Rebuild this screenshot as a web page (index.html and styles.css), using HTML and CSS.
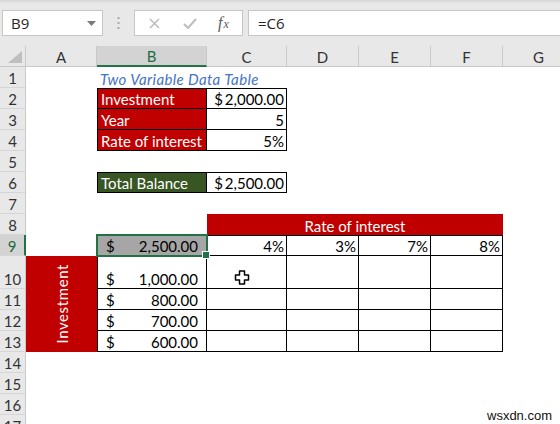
FILE: index.html
```html
<!DOCTYPE html>
<html>
<head>
<meta charset="utf-8">
<link rel="stylesheet" href="styles.css">
</head>
<body>
<div class="app">
  <div class="toolbar">
    <div class="namebox"><span>B9</span>
      <svg class="drop" width="9" height="5" viewBox="0 0 9 5"><polygon points="0,0 9,0 4.5,5" fill="#7a7a7a"/></svg>
    </div>
    <div class="dots">
      <svg width="3" height="12" viewBox="0 0 3 12"><rect x="0.5" y="0" width="2" height="2" fill="#a8a8a8"/><rect x="0.5" y="5" width="2" height="2" fill="#a8a8a8"/><rect x="0.5" y="10" width="2" height="2" fill="#a8a8a8"/></svg>
    </div>
    <div class="fxbox">
      <svg class="ic-x" width="11" height="11" viewBox="0 0 11 11"><path d="M1 1 L10 10 M10 1 L1 10" stroke="#bdbdbd" stroke-width="1.6" fill="none"/></svg>
      <svg class="ic-ok" width="14" height="11" viewBox="0 0 14 11"><path d="M1 6 L5 10 L13 1" stroke="#bdbdbd" stroke-width="2" fill="none"/></svg>
      <span class="fx"><span class="f">f</span><span class="x">x</span></span>
    </div>
    <div class="formula">=C6</div>
  </div>

  <div class="sheet">
    <div class="ch corner r0 cH"><svg width="14" height="12" viewBox="0 0 14 12"><polygon points="14,0 14,12 0,12" fill="#bfbfbf"/></svg></div>
    <div class="ch r0 cA">A</div>
    <div class="ch sel r0 cB">B</div>
    <div class="ch r0 cC">C</div>
    <div class="ch r0 cD">D</div>
    <div class="ch r0 cE">E</div>
    <div class="ch r0 cF">F</div>
    <div class="ch r0 cG">G</div>

    <div class="rh r1 cH">1</div>
    <div class="rh r2 cH">2</div>
    <div class="rh r3 cH">3</div>
    <div class="rh r4 cH">4</div>
    <div class="rh r5 cH">5</div>
    <div class="rh r6 cH">6</div>
    <div class="rh r7 cH">7</div>
    <div class="rh r8 cH">8</div>
    <div class="rh sel r9 cH">9</div>
    <div class="rh r10 cH">10</div>
    <div class="rh r11 cH">11</div>
    <div class="rh r12 cH">12</div>
    <div class="rh r13 cH">13</div>
    <div class="rh r14 cH">14</div>
    <div class="rh r15 cH">15</div>
    <div class="rh r16 cH">16</div>
    <div class="rh r17 cH">17</div>

    <div class="cell title r1 cB">Two Variable Data Table</div>

    <div class="cell red b bt bl r2 cB">Investment</div>
    <div class="cell num b bt r2 cC">$&#8201;2,000.00</div>
    <div class="cell red b bl r3 cB">Year</div>
    <div class="cell num b r3 cC">5</div>
    <div class="cell red b bl r4 cB">Rate of interest</div>
    <div class="cell num b r4 cC">5%</div>

    <div class="cell green b bt bl r6 cB">Total Balance</div>
    <div class="cell num b bt r6 cC">$&#8201;2,500.00</div>

    <div class="cell red center r8 span-cf">Rate of interest</div>

    <div class="cell acct selcell b bt bl r9 cB"><span>$</span><span>2,500.00</span></div>
    <div class="cell num b bt r9 cC">4%</div>
    <div class="cell num b bt r9 cD">3%</div>
    <div class="cell num b bt r9 cE">7%</div>
    <div class="cell num b bt r9 cF">8%</div>

    <div class="cell red vcell span-a cA"><span class="vert">Investment</span></div>

    <div class="cell acct b bl r10 cB"><span>$</span><span>1,000.00</span></div>
    <div class="cell b r10 cC"></div>
    <div class="cell b r10 cD"></div>
    <div class="cell b r10 cE"></div>
    <div class="cell b r10 cF"></div>

    <div class="cell acct b bl r11 cB"><span>$</span><span>800.00</span></div>
    <div class="cell b r11 cC"></div>
    <div class="cell b r11 cD"></div>
    <div class="cell b r11 cE"></div>
    <div class="cell b r11 cF"></div>

    <div class="cell acct b bl r12 cB"><span>$</span><span>700.00</span></div>
    <div class="cell b r12 cC"></div>
    <div class="cell b r12 cD"></div>
    <div class="cell b r12 cE"></div>
    <div class="cell b r12 cF"></div>

    <div class="cell acct b bl r13 cB"><span>$</span><span>600.00</span></div>
    <div class="cell b r13 cC"></div>
    <div class="cell b r13 cD"></div>
    <div class="cell b r13 cE"></div>
    <div class="cell b r13 cF"></div>
  </div>

  <svg class="cursor" width="16" height="15" viewBox="0 0 16 15"><polygon points="5.5,1 10.5,1 10.5,5 14.5,5 14.5,10 10.5,10 10.5,14 5.5,14 5.5,10 1.5,10 1.5,5 5.5,5" fill="#fff" stroke="#000" stroke-width="1.5" stroke-linejoin="round"/></svg>

  <div class="watermark">wsxdn.com</div>
</div>
</body>
</html>
```
FILE: styles.css
```css
* { box-sizing: border-box; }
html, body { margin: 0; padding: 0; }
body {
  width: 560px;
  height: 424px;
  overflow: hidden;
  background: #fff;
  font-family: Lato, "Liberation Sans", sans-serif;
  color: #000;
}
.app {
  position: relative;
  width: 560px;
  height: 424px;
  overflow: hidden;
}

/* formula bar */
.toolbar {
  height: 46px;
  background: linear-gradient(#d6d6d6, #e8e8e8 4px, #e8e8e8);
  display: flex;
  align-items: flex-start;
  padding-top: 10px;
}
.namebox {
  margin-left: 2px;
  width: 101px;
  height: 26px;
  background: #fff;
  border: 1px solid #c6c6c6;
  display: flex;
  align-items: center;
  justify-content: space-between;
  padding: 0 6px 0 8px;
  font-family: "Open Sans", sans-serif;
  font-size: 15px;
  color: #262626;
}
.dots {
  width: 31px;
  height: 26px;
  display: flex;
  align-items: center;
  justify-content: center;
}
.fxbox {
  width: 109px;
  height: 26px;
  background: #fff;
  border: 1px solid #c6c6c6;
  display: flex;
  align-items: center;
  padding-left: 14px;
}
.ic-x { margin-right: 23px; }
.ic-ok { margin-right: 21px; }
.fx {
  font-family: "Liberation Serif", serif;
  font-style: italic;
  color: #5a5a5a;
  font-size: 16px;
  display: flex;
  align-items: baseline;
}
.fx .x { font-size: 12px; margin-left: 1px; }
.formula {
  margin-left: 5px;
  flex: 1;
  height: 26px;
  background: #fff;
  border: 1px solid #c6c6c6;
  border-right: none;
  padding-left: 9px;
  display: flex;
  align-items: center;
  font-family: "Open Sans", sans-serif;
  font-size: 15px;
  color: #262626;
}

/* sheet grid */
.sheet {
  display: grid;
  grid-template-columns: 26px 71px 110px 80px 72px 72px 72px 72px;
  grid-template-rows: 21px repeat(9, 21px) 33px repeat(7, 21px);
  font-size: 15px;
}
.r0 { grid-row: 1; }
.r1 { grid-row: 2; }
.r2 { grid-row: 3; }
.r3 { grid-row: 4; }
.r4 { grid-row: 5; }
.r5 { grid-row: 6; }
.r6 { grid-row: 7; }
.r7 { grid-row: 8; }
.r8 { grid-row: 9; }
.r9 { grid-row: 10; }
.r10 { grid-row: 11; }
.r11 { grid-row: 12; }
.r12 { grid-row: 13; }
.r13 { grid-row: 14; }
.r14 { grid-row: 15; }
.r15 { grid-row: 16; }
.r16 { grid-row: 17; }
.r17 { grid-row: 18; }
.cH { grid-column: 1; }
.cA { grid-column: 2; }
.cB { grid-column: 3; }
.cC { grid-column: 4; }
.cD { grid-column: 5; }
.cE { grid-column: 6; }
.cF { grid-column: 7; }
.cG { grid-column: 8; }
.span-cf { grid-column: 4 / 8; }
.span-a { grid-row: 11 / 15; }

.ch {
  background: #e8e8e8;
  border-right: 1px solid #c9c9c9;
  border-bottom: 1px solid #c9c9c9;
  display: flex;
  align-items: center;
  justify-content: center;
  color: #333;
  padding-top: 1px;
}
.ch.sel {
  background: #d3d3d3;
  color: #1f6b3f;
  border-bottom: 2px solid #217346;
}
.corner {
  align-items: flex-end;
  justify-content: flex-end;
  padding: 0 3px 3px 0;
}
.rh {
  background: #e8e8e8;
  border-right: 1px solid #c9c9c9;
  border-bottom: 1px solid #d6d6d6;
  display: flex;
  align-items: flex-end;
  justify-content: center;
  color: #333;
  line-height: 18px;
  padding-bottom: 0;
}
.rh.sel {
  background: #d3d3d3;
  color: #1f6b3f;
  border-right: 2px solid #217346;
}

.cell {
  display: flex;
  align-items: flex-end;
  padding: 0 3px 0;
  line-height: 18px;
  white-space: nowrap;
}
.num { justify-content: flex-end; padding-right: 2px; }
.center { justify-content: center; }
.acct { justify-content: space-between; padding: 0 8px 0 8px; }
.title {
  font-style: italic;
  color: #4472c4;
  overflow: visible;
  letter-spacing: 0.4px;
}
.red { background: #c00000; color: #fff; }
.green { background: #375623; color: #fff; }
.b { border-right: 1px solid #000; border-bottom: 1px solid #000; }
.bt { border-top: 1px solid #000; }
.bl { border-left: 1px solid #000; }

.selcell {
  position: relative;
  z-index: 2;
  background: #a6a6a6;
  outline: 2px solid #217346;
  outline-offset: -1px;
}
.selcell::after {
  content: "";
  position: absolute;
  right: -4px;
  bottom: -4px;
  width: 6px;
  height: 6px;
  background: #217346;
  border: 1px solid #fff;
}

.vcell {
  align-items: center;
  justify-content: center;
  padding: 0;
}
.vert {
  writing-mode: vertical-rl;
  transform: rotate(180deg);
  letter-spacing: 0.6px;
}

.cursor {
  position: absolute;
  left: 234px;
  top: 270px;
}
.watermark {
  position: absolute;
  left: 487px;
  top: 408px;
  font-family: "Liberation Sans", sans-serif;
  font-size: 13px;
  line-height: 15px;
  color: #111;
}
```
